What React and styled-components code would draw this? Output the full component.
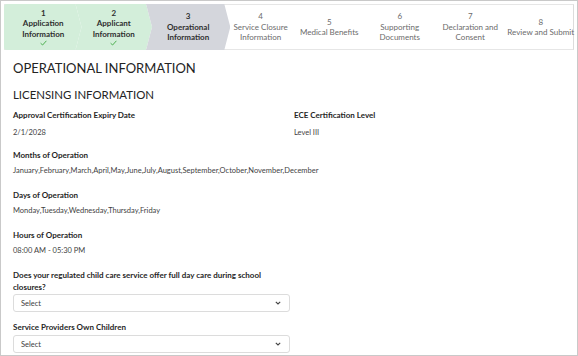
import React from "react";
import styled, { createGlobalStyle, css } from "styled-components";

const GlobalStyle = createGlobalStyle`
  html, body {
    margin: 0;
    padding: 0;
    background: #ffffff;
  }
  body {
    font-family: Lato, "Open Sans", "Liberation Sans", sans-serif;
    color: #2b2b2b;
  }
`;

const Frame = styled.div`
  box-sizing: border-box;
  width: 578px;
  height: 356px;
  border: 1px solid #c9c9c9;
  padding: 3px;
  overflow: hidden;
`;

const Stepper = styled.ol`
  display: flex;
  margin: 0;
  padding: 0;
  list-style: none;
  height: 44px;
  border: 1px solid #e6e6e6;
  border-right-color: #dcdcdc;
  isolation: isolate;
`;

const arrowClip = `polygon(0 0, calc(100% - 6px) 0, 100% 50%, calc(100% - 6px) 100%, 0 100%, 6px 50%)`;
const firstClip = `polygon(0 0, calc(100% - 6px) 0, 100% 50%, calc(100% - 6px) 100%, 0 100%)`;

const stepColors = {
  done: "#d3eeda",
  active: "#d4d6dc",
};

const Step = styled.li`
  position: relative;
  flex: ${(p) => p.$grow || 1} 1 0;
  min-width: 0;
  display: flex;
  flex-direction: column;
  align-items: center;
  justify-content: center;
  padding-left: 6px;
  text-align: center;
  font-size: 8px;
  line-height: 10.5px;
  white-space: nowrap;
  color: ${(p) => (p.$state === "todo" ? "#6b6b6b" : "#2f2f2f")};
  font-weight: ${(p) => (p.$state === "todo" ? 400 : 700)};

  ${(p) =>
    p.$state !== "todo" &&
    css`
      &::before {
        content: "";
        position: absolute;
        top: -1px;
        bottom: -1px;
        left: ${p.$first ? "-1px" : "0"};
        right: -6px;
        background: ${stepColors[p.$state]};
        clip-path: ${p.$first ? firstClip : arrowClip};
        border-radius: ${p.$first ? "3px 0 0 3px" : "0"};
        z-index: -1;
      }
    `}
`;

const StepLine = styled.span`
  display: block;
`;

const Check = styled.svg`
  display: block;
  margin-top: 1px;
  width: 7px;
  height: 6px;
`;

const Content = styled.main`
  padding: 9px 9px 0 9px;
`;

const PageTitle = styled.h1`
  margin: 0 0 8px;
  font-size: 13px;
  line-height: 19px;
  font-weight: 400;
  color: #232323;
`;

const SectionTitle = styled.h2`
  margin: 0 0 6px;
  font-size: 11.4px;
  line-height: 17px;
  font-weight: 400;
  color: #232323;
`;

const FieldRow = styled.div`
  display: grid;
  grid-template-columns: 281px 1fr;
  margin-bottom: 10px;
`;

const Field = styled.div`
  margin-bottom: ${(p) => (p.$tight ? "9px" : p.$inRow ? "0" : "12px")};
  width: ${(p) => (p.$narrow ? "277px" : "auto")};
`;

const Label = styled.div`
  font-size: 8px;
  line-height: 12px;
  font-weight: 700;
  color: #262626;
  margin-bottom: ${(p) => p.$gap};
`;

const Value = styled.div`
  font-size: 7.5px;
  line-height: 12px;
  color: #3f3f3f;
`;

const SelectBox = styled.div`
  box-sizing: border-box;
  display: flex;
  align-items: center;
  justify-content: space-between;
  width: 277px;
  height: 18px;
  padding: 0 8px 0 7px;
  border: 1px solid #dcdcdc;
  border-radius: 3px;
  background: #fff;
  font-size: 7.5px;
  color: #3d3d3d;
`;

const steps = [
  { n: 1, lines: ["Application", "Information"], state: "done" },
  { n: 2, lines: ["Applicant", "Information"], state: "done" },
  { n: 3, lines: ["Operational", "Information"], state: "active", grow: 1.12 },
  { n: 4, lines: ["Service Closure", "Information"], state: "todo", grow: 0.94 },
  { n: 5, lines: ["Medical Benefits"], state: "todo" },
  { n: 6, lines: ["Supporting", "Documents"], state: "todo" },
  { n: 7, lines: ["Declaration and", "Consent"], state: "todo" },
  { n: 8, lines: ["Review and Submit"], state: "todo" },
];

const Chevron = () => (
  <svg width="6" height="4" viewBox="0 0 6 4" fill="none">
    <path d="M0.8 0.8 L3 3 L5.2 0.8" stroke="#444" strokeWidth="1.1" />
  </svg>
);

const Select = ({ children }) => (
  <SelectBox>
    <span>{children}</span>
    <Chevron />
  </SelectBox>
);

const App = () => {
  return (
    <>
      <GlobalStyle />
      <Frame>
        <Stepper>
          {steps.map((s, i) => (
            <Step key={s.n} $state={s.state} $first={i === 0} $grow={s.grow}>
              <StepLine>{s.n}</StepLine>
              {s.lines.map((line) => (
                <StepLine key={line}>{line}</StepLine>
              ))}
              {s.state === "done" && (
                <Check viewBox="0 0 7 6">
                  <path d="M0.6 3.2 L2.6 5 L6.4 0.8" fill="none" stroke="#4caf50" strokeWidth="1" />
                </Check>
              )}
            </Step>
          ))}
        </Stepper>

        <Content>
          <PageTitle>OPERATIONAL INFORMATION</PageTitle>
          <SectionTitle>LICENSING INFORMATION</SectionTitle>

          <FieldRow>
            <Field $inRow>
              <Label $gap="6px">Approval Certification Expiry Date</Label>
              <Value>2/1/2028</Value>
            </Field>
            <Field $inRow>
              <Label $gap="6px">ECE Certification Level</Label>
              <Value>Level III</Value>
            </Field>
          </FieldRow>

          <Field>
            <Label $gap="4px">Months of Operation</Label>
            <Value>
              January,February,March,April,May,June,July,August,September,October,November,December
            </Value>
          </Field>

          <Field>
            <Label $gap="4px">Days of Operation</Label>
            <Value>Monday,Tuesday,Wednesday,Thursday,Friday</Value>
          </Field>

          <Field>
            <Label $gap="4px">Hours of Operation</Label>
            <Value>08:00 AM - 05:30 PM</Value>
          </Field>

          <Field $narrow $tight>
            <Label $gap="1px">
              Does your regulated child care service offer full day care during school closures?
            </Label>
            <Select>Select</Select>
          </Field>

          <Field $narrow>
            <Label $gap="2px">Service Providers Own Children</Label>
            <Select>Select</Select>
          </Field>
        </Content>
      </Frame>
    </>
  );
};

export default App;
